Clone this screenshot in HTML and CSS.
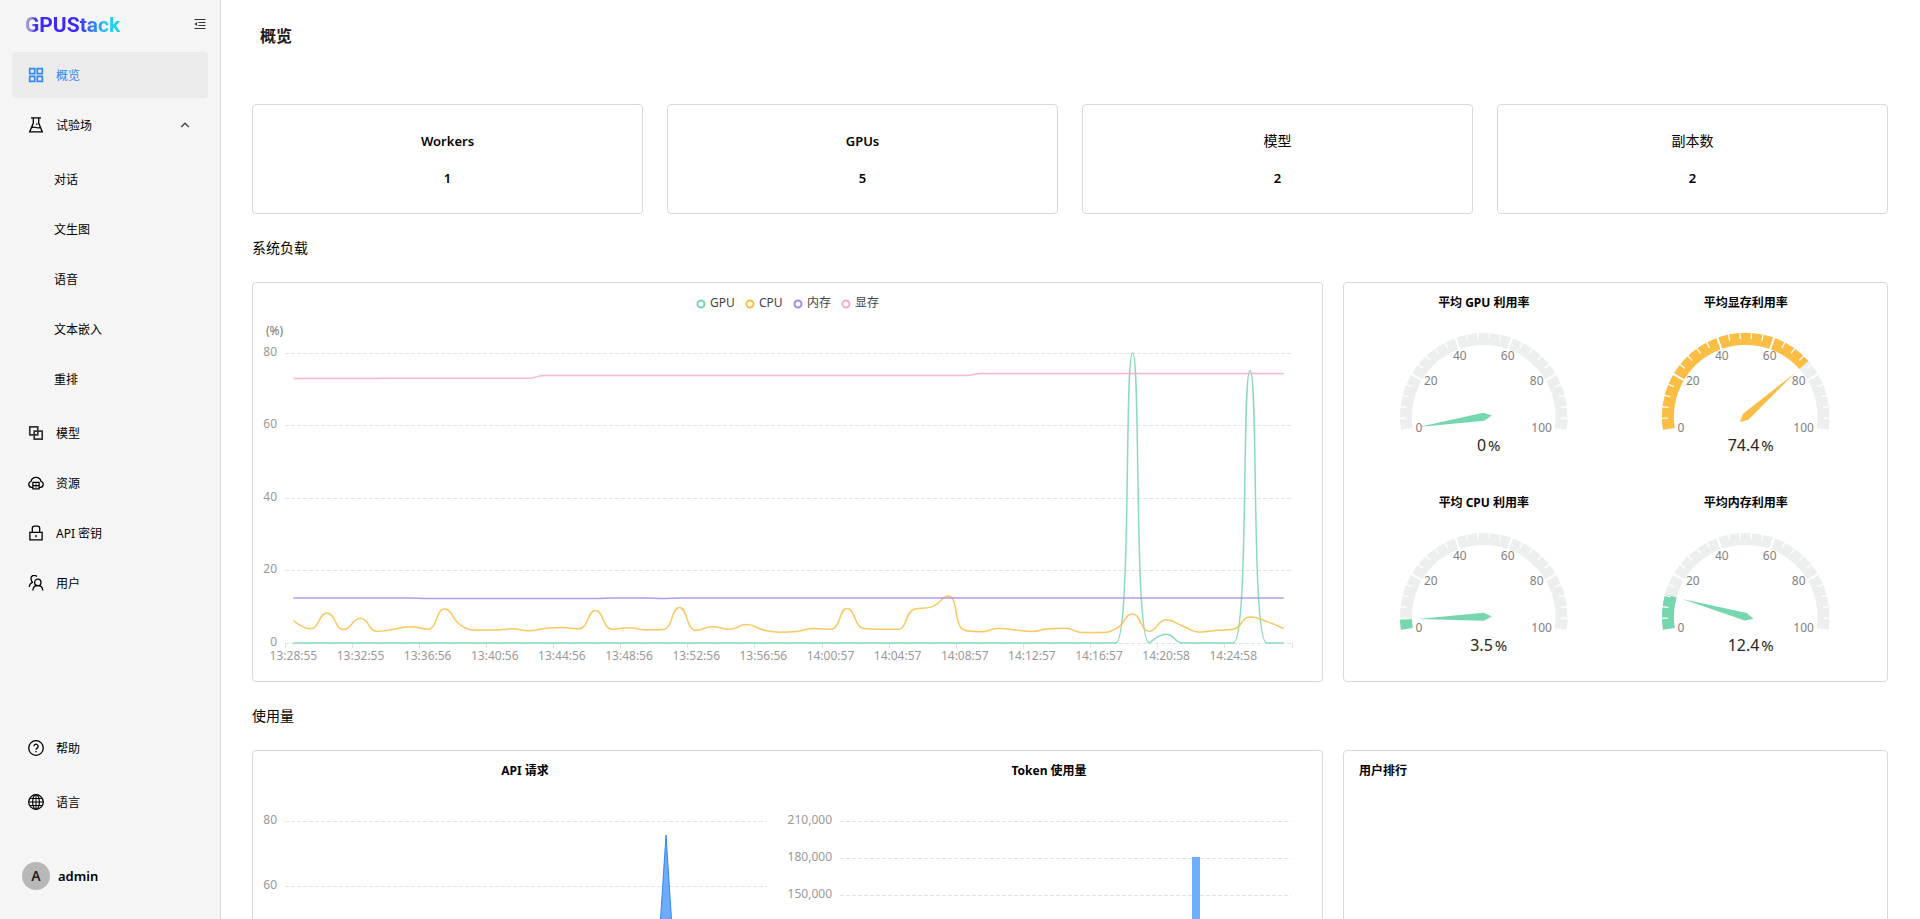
FILE: index.html
```html
<!DOCTYPE html>
<html lang="zh-CN">
<head>
<meta charset="utf-8">
<title>GPUStack</title>
<link rel="stylesheet" href="styles.css">
</head>
<body>
<div class="layout">
  <aside class="sidebar">
    <div class="brand">
      <a class="logo" href="#" aria-label="GPUStack"><span class="logo-g">G</span><span class="logo-rest">PUStack</span></a>
      <button class="collapse" type="button" aria-label="收起菜单">
        <svg width="12" height="12" viewBox="0 0 12 12" fill="none" stroke="currentColor" stroke-width="1.2"><path d="M0.500 1.500H11.500M4.500 4.500H11.500M4.500 7.500H11.500M0.500 10.500H11.500"/><path d="M3 4v4L0.500 6z" fill="currentColor" stroke="none"/></svg>
      </button>
    </div>
    <nav class="menu">
      <a class="item active" href="#"><svg class="icon bold" viewBox="0 0 16 16"><path d="M1.700 1.700h5v5h-5zM9.300 1.700h5v5h-5zM1.700 9.300h5v5h-5zM9.300 9.300h5v5h-5z"/></svg>概览</a>
      <a class="item" href="#"><svg class="icon" viewBox="0 0 16 16"><path d="M3 .900h10M5.300 1v5L1.700 14.900h12.600L10.700 6V1M3.600 10.800c1.800-1.300 3-.900 4.500-.300s2.600.600 4.200-.200M8 7.200h1.600"/></svg>试验场<svg class="chevron" viewBox="0 0 10 10"><path d="M1.200 7 5 3.200 8.800 7"/></svg></a>
      <div class="submenu">
        <a class="item sub" href="#">对话</a>
        <a class="item sub" href="#">文生图</a>
        <a class="item sub" href="#">语音</a>
        <a class="item sub" href="#">文本嵌入</a>
        <a class="item sub" href="#">重排</a>
      </div>
      <a class="item" href="#"><svg class="icon bold soft" viewBox="0 0 16 16"><path d="M1.800 1.800h8v8h-8zM6.200 6.200h8v8h-8z"/></svg>模型</a>
      <a class="item" href="#"><svg class="icon" viewBox="0 0 16 16"><path d="M4.500 12.300H3.600A3 3 0 0 1 3 6.400 5.100 5.100 0 0 1 13 6.400a3 3 0 0 1-.600 5.900h-.900M4.900 7.400h6.200v6.400H4.900zM4.900 10.600h6.200M7.600 9h.900M7.600 12.200h.900"/></svg>资源</a>
      <a class="item" href="#"><svg class="icon" viewBox="0 0 16 16"><path d="M1.900 7.300h12.200v7.600H1.900zM4.300 7.200V3.300A2.200 2.200 0 0 1 6.500 1.100h3a2.200 2.200 0 0 1 2.200 2.200v3.900M8 10v2.300"/></svg>API 密钥</a>
      <a class="item" href="#"><svg class="icon" viewBox="0 0 16 16"><path d="M4.900 15.500C5 12.500 6.800 10.700 9.800 10.700s4.800 1.800 5 4.800M8.800 1.600A3.200 3.200 0 0 0 3.200 4.500C3.200 5.600 3.700 6.500 4.500 7.100M5 7.200C2.800 8 1.500 9.600 1.300 12"/><circle cx="9.800" cy="7.400" r="3.200"/></svg>用户</a>
    </nav>
    <div class="tools">
      <button class="item" type="button"><svg class="icon" viewBox="0 0 16 16"><circle cx="8" cy="8" r="7.300"/><path d="M5.900 6.300a2.100 2.100 0 1 1 3.200 1.800C8.300 8.600 8 8.900 8 9.800M8 11v1.300"/></svg>帮助</button>
      <button class="item" type="button"><svg class="icon" viewBox="0 0 16 16"><circle cx="8" cy="8" r="7.300"/><ellipse cx="8" cy="8" rx="3.400" ry="7.300" stroke-width="1.100"/><path stroke-width="1" d="M8 .700v14.600M.700 8h14.600M2 4.500h12M2 11.500h12"/></svg>语言</button>
    </div>
    <button class="user" type="button"><span class="avatar">A</span>admin</button>
  </aside>

  <main class="main">
    <h1 class="page-title">概览</h1>
    <section class="stats">
      <div class="card stat"><span class="latin">Workers</span><span class="latin">1</span></div>
      <div class="card stat"><span class="latin">GPUs</span><span class="latin">5</span></div>
      <div class="card stat"><span>模型</span><span class="latin">2</span></div>
      <div class="card stat"><span>副本数</span><span class="latin">2</span></div>
    </section>

    <h2 class="section-title">系统负载</h2>
    <section class="row">
      <div class="card"><svg class="chart" id="load" viewBox="0 0 1069 398" role="img" aria-label="系统负载"></svg></div>
      <div class="card gauges" id="gauges"></div>
    </section>

    <h2 class="section-title">使用量</h2>
    <section class="row">
      <div class="card"><svg class="chart" id="usage" viewBox="0 0 1069 398" role="img" aria-label="使用量"></svg></div>
      <div class="card rank"><h3 class="rank-title">用户排行</h3></div>
    </section>
  </main>
</div>
<script src="charts.js"></script>
</body>
</html>
```
FILE: styles.css
```css
* { box-sizing: border-box; }

body {
  margin: 0;
  font-family: "Noto Sans", "Noto Sans CJK SC", sans-serif;
  font-size: 12px;
  color: #000;
  background: #fff;
}

h1, h2, h3 { margin: 0; }

a { color: inherit; text-decoration: none; }

button {
  font: inherit;
  color: inherit;
  background: none;
  border: 0;
  padding: 0;
  cursor: pointer;
}

.layout { display: flex; height: 100vh; }

/* Sidebar */
.sidebar {
  flex: 0 0 221px;
  display: flex;
  flex-direction: column;
  background: #f5f5f5;
  border-right: 1px solid #d9d9d9;
  padding: 0 12px 29px;
}

.brand {
  display: flex;
  align-items: center;
  justify-content: space-between;
  height: 48px;
  padding: 0 2px 0 13px;
  margin-bottom: 4px;
}

.logo { padding-top: 2px; font: 700 21px/24px Roboto, sans-serif; }

.logo-g, .logo-rest {
  color: transparent;
  -webkit-background-clip: text;
  background-clip: text;
}

.logo-g { background-image: linear-gradient(90deg, #a9a4d8 0%, #8c84e0 45%, #4430f5 75%); }
.logo-rest { background-image: linear-gradient(90deg, #3c28ff 48%, #3a7cf0 66%, #1fd0f4 84%); }

.collapse { display: flex; color: #333; }

.menu { display: flex; flex-direction: column; gap: 4px; }

.submenu { display: flex; flex-direction: column; gap: 4px; padding: 4px 0; }

.item {
  display: flex;
  align-items: center;
  gap: 12px;
  height: 46px;
  padding: 0 16px;
  border-radius: 4px;
}

.item.active { background: #ebebeb; color: #2f88f5; }
.item.sub { padding-left: 42px; }

.icon {
  width: 16px;
  height: 16px;
  fill: none;
  stroke: currentColor;
  stroke-width: 1.3;
}

.bold { stroke-width: 1.7; }
.soft { color: #333; }

.chevron {
  width: 10px;
  height: 10px;
  margin: 0 2px 0 auto;
  fill: none;
  stroke: #444;
  stroke-width: 1.4;
}

.tools { display: flex; flex-direction: column; gap: 8px; margin-top: auto; }

.user {
  display: flex;
  align-items: center;
  gap: 8px;
  margin-top: 37px;
  padding-left: 10px;
  font-size: 13px;
  font-weight: 600;
}

.avatar {
  width: 28px;
  height: 28px;
  border-radius: 50%;
  background: #b8b8b8;
  color: #222;
  font-size: 14px;
  line-height: 28px;
  text-align: center;
}

/* Content */
.main {
  flex: 1;
  min-width: 0;
  padding: 0 32px 32px 31px;
  overflow-y: auto;
  scrollbar-width: none;
}

.page-title {
  padding: 24px 8px 56px;
  color: #1a1a1a;
  font-size: 16px;
  line-height: 24px;
}

.section-title {
  padding: 24px 0;
  font-size: 14px;
  font-weight: 400;
  line-height: 20px;
}

.card {
  border: 1px solid #d9d9d9;
  border-radius: 4px;
  background: #fff;
}

.stats { display: grid; grid-template-columns: repeat(4, 1fr); gap: 24px; }

.stat {
  display: flex;
  flex-direction: column;
  align-items: center;
  gap: 15px;
  padding: 25px 24px 24px;
  font-size: 14px;
  line-height: 22px;
}

.latin { font-size: 13px; font-weight: 600; }

.row { display: grid; grid-template-columns: 1071fr 545fr; gap: 20px; }

.chart { display: block; width: 100%; }

.gauges {
  display: grid;
  grid-template-columns: 1fr 1fr;
  row-gap: 10px;
  padding: 0 10px;
  align-content: start;
}

.rank { padding: 10px 15px; }
.rank-title { font-size: 12px; line-height: 20px; }

/* Chart parts */
svg text { font-size: 12px; fill: #999; }
svg .mid { text-anchor: middle; }
svg .end { text-anchor: end; }
svg .title { fill: #000; font-weight: 700; }
svg .legend { fill: #444; }
svg .unit { fill: #777; }
svg .scale { fill: #808080; }
svg .value { fill: #262626; font-size: 16px; }
svg .percent { font-size: 15px; }
.grid-line { stroke: #e0e4f2; stroke-dasharray: 4 2; }
.tick { stroke: #e0e0e6; }
.line { fill: none; stroke-width: 1.5; opacity: 0.85; }
.area { fill: #6eaaff; stroke: #2f88f0; }
.bar { fill: #6eaeff; }
```
FILE: charts.js
```js
const GREEN = '#76d6ad', YELLOW = '#fbbd43', PURPLE = '#a688e6', PINK = '#ffa6d0';

const text = (x, y, cls, s) => `<text x="${x}" y="${y}" class="${cls}">${s}</text>`;
const grid = (x1, x2, y) => `<line class="grid-line" x1="${x1}" x2="${x2}" y1="${y}" y2="${y}"/>`;

// Cubic smoothing with control points clamped to the neighbouring values.
function smooth(pts) {
  const clamp = (v, a, b) => Math.max(Math.min(a, b), Math.min(v, Math.max(a, b)));
  let d = `M${pts[0]}`, c0 = pts[0];
  for (let i = 1; i < pts.length; i++) {
    const p = pts[i - 1], q = pts[i], n = pts[i + 1];
    let c1 = q, next = q;
    if (n) {
      const lp = Math.hypot(q[0] - p[0], q[1] - p[1]), ln = Math.hypot(n[0] - q[0], n[1] - q[1]);
      const r = ln / (ln + lp);
      next = [0, 1].map(k => clamp(q[k] + (n[k] - p[k]) * 0.5 * r, q[k], n[k]));
      c1 = [0, 1].map(k => clamp(q[k] - (next[k] - q[k]) * lp / ln, p[k], q[k]));
      next = [0, 1].map(k => q[k] + (q[k] - c1[k]) * ln / lp);
    }
    d += `C${c0} ${c1} ${q}`;
    c0 = next;
  }
  return d;
}

// System load
(function () {
  const left = 32, right = 1039, bottom = 360, band = (right - left) / 60;
  const cpu = [6.2,3.9,8.3,3.7,6.8,3.2,3.8,4.5,3.8,9.4,4.8,3.6,3.6,3.9,3.4,4,4.3,3.9,9,3.8,4.2,3.6,3.7,9.8,3.5,4.5,3.8,5.1,3.6,3,
    3.2,4,3.8,9.5,4,3.8,3.8,9.3,9.9,13,3.5,3.1,4.1,3.6,3.2,3.9,4.1,2.9,2.9,3.9,8,3.2,6.4,4.6,3,3.5,3.8,7.2,5.9,4];
  const gpu = Array(60).fill(0);
  gpu[50] = 80; gpu[52] = 2.4; gpu[57] = 75.2;
  const ram = cpu.map((_, i) => (i > 7 && i < 19) || i === 22 ? 12.28 : 12.41);
  const vram = cpu.map((_, i) => i < 6 ? 72.97 : i < 15 ? 73.05 : i < 41 ? 73.79 : 74.34);
  let s = '';
  [['GPU', GREEN, 448, 457], ['CPU', YELLOW, 497, 506], ['内存', PURPLE, 545, 554], ['显存', PINK, 593, 602]].forEach(([n, c, x, tx]) => {
    s += `<circle cx="${x}" cy="21" r="3.5" fill="#fff" stroke="${c}" stroke-width="2"/>` + text(tx, 24, 'legend', n);
  });
  s += text(13, 52, 'unit', '(%)');
  [80, 60, 40, 20, 0].forEach((v, i) => {
    const y = Math.floor(70 + i * 72.5) + 0.5;
    s += grid(left, right, y) + text(24, y + 2, 'end', v);
  });
  for (let i = 0; i <= 15; i++) {
    const x = Math.floor(left + i * band * 4) + 0.5;
    s += `<line class="tick" x1="${x}" x2="${x}" y1="360" y2="365"/>`;
  }
  ['13:28:55','13:32:55','13:36:56','13:40:56','13:44:56','13:48:56','13:52:56','13:56:56','14:00:57','14:04:57','14:08:57','14:12:57','14:16:57','14:20:58','14:24:58']
    .forEach((t, i) => { s += text(left + band * (4 * i + 0.5), 377, 'mid', t); });
  [[gpu, GREEN], [cpu, YELLOW], [ram, PURPLE], [vram, PINK]].forEach(([data, c]) => {
    const pts = data.map((v, i) => [left + band * (i + 0.5), bottom - v * 290 / 80]);
    s += `<path class="line" stroke="${c}" d="${smooth(pts)}"/>`;
  });
  document.getElementById('load').innerHTML = s;
})();

// Utilisation gauges
(function () {
  const cx = 130, cy = 134, R = 84, W = 12;
  const at = (v, r) => {
    const a = (189 - 198 * v / 100) * Math.PI / 180;
    return [cx + r * Math.cos(a), cy - r * Math.sin(a)];
  };
  const arc = (v, c) => {
    const big = 198 * v / 100 > 180 ? 1 : 0, r = R - W / 2;
    return `<path fill="none" stroke="${c}" stroke-width="${W}" d="M${at(0, r)}A${r} ${r} 0 ${big} 1 ${at(v, r)}"/>`;
  };
  const gauge = (name, v, c) => {
    let s = arc(100, '#edefef') + (v ? arc(v, c) : '');
    for (let t = 4; t < 100; t += 4) {
      const a = at(t, R + 1), b = at(t, t % 20 ? R - 6 : R - W - 1);
      s += `<line x1="${a[0]}" y1="${a[1]}" x2="${b[0]}" y2="${b[1]}" stroke="#fff" stroke-width="${t % 20 ? 1.3 : 2}"/>`;
    }
    [[0, -65, 15], [20, -53, -32], [40, -24, -57], [60, 24, -57], [80, 53, -32], [100, 58, 15]]
      .forEach(([t, x, y]) => { s += text(cx + x, cy + y, 'mid scale', t); });
    s += `<path fill="${c}" d="M-66 0L0-4 8 0 0 4z" transform="translate(${cx} ${cy}) rotate(${-9 + 198 * v / 100})"/>`;
    s += text(cx, 24, 'mid title', name);
    s += `<text x="${cx + 5}" y="${cy + 34}" class="mid value">${v}<tspan class="percent" dx="2">%</tspan></text>`;
    return `<svg class="chart" viewBox="0 0 262 190" role="img" aria-label="${name}">${s}</svg>`;
  };
  document.getElementById('gauges').innerHTML =
    gauge('平均 GPU 利用率', 0, GREEN) + gauge('平均显存利用率', 74.4, YELLOW) +
    gauge('平均 CPU 利用率', 3.5, GREEN) + gauge('平均内存利用率', 12.4, GREEN);
})();

// Usage
(function () {
  let s = text(272, 24, 'mid title', 'API 请求') + text(796, 24, 'mid title', 'Token 使用量');
  ['80', '60'].forEach((v, i) => {
    const y = 70.5 + 65 * i;
    s += grid(32, 514, y) + text(24, y + 2, 'end', v);
  });
  ['210,000', '180,000', '150,000'].forEach((v, i) => {
    const y = 70.5 + 37 * i;
    s += grid(587, 1038, y) + text(579, y + 2, 'end', v);
  });
  s += '<path class="area" d="M397 330L413 84 429 330z"/><rect class="bar" x="939" y="106" width="8" height="224"/>';
  document.getElementById('usage').innerHTML = s;
})();
```
